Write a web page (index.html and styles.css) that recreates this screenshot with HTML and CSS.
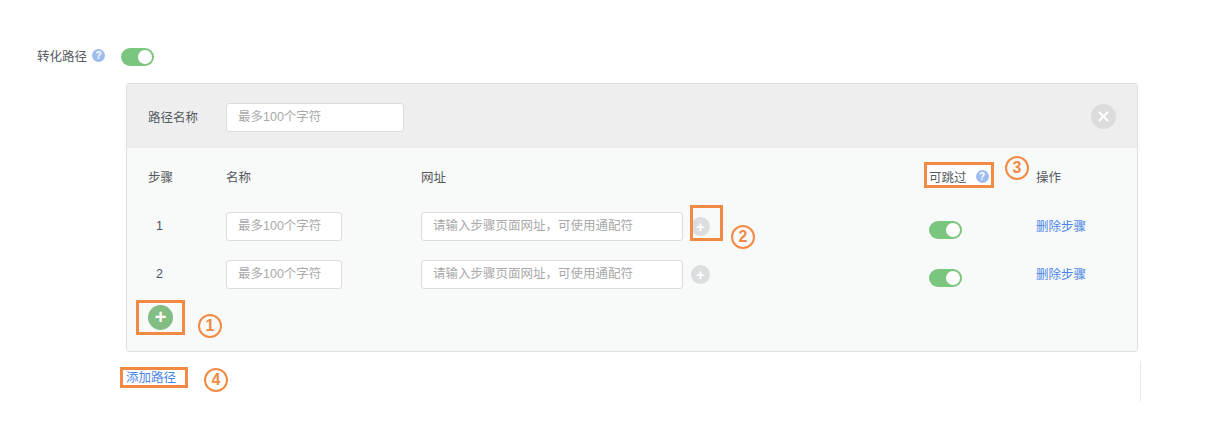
FILE: index.html
```html
<!DOCTYPE html>
<html lang="zh-CN">
<head>
    <meta charset="UTF-8">
    <title>转化路径</title>
    <link rel="stylesheet" href="styles.css">
</head>
<body>
    <div class="page">
        <div class="setting">
            <span class="setting-label">转化路径</span>
            <span class="help">?</span>
            <span class="switch setting-switch"></span>
        </div>

        <div class="panel">
            <div class="panel-head">
                <span class="panel-title">路径名称</span>
                <input class="field field-title" placeholder="最多100个字符">
                <span class="close">
                    <svg width="11" height="11" viewBox="0 0 11 11"><path d="M1.5 1.5l8 8M9.5 1.5l-8 8" stroke="#fff" stroke-width="2" stroke-linecap="round"/></svg>
                </span>
            </div>
            <div class="panel-body">
                <div class="row row-head">
                    <span>步骤</span>
                    <span>名称</span>
                    <span>网址</span>
                    <span class="skip-head">可跳过<span class="help">?</span></span>
                    <span>操作</span>
                </div>
                <div class="row">
                    <span class="step-no">1</span>
                    <input class="field field-name" placeholder="最多100个字符">
                    <span class="url-cell">
                        <input class="field field-url" placeholder="请输入步骤页面网址，可使用通配符">
                        <span class="plus plus-grey">+</span>
                    </span>
                    <span class="switch row-switch"></span>
                    <a class="link row-link" href="#">删除步骤</a>
                </div>
                <div class="row">
                    <span class="step-no">2</span>
                    <input class="field field-name" placeholder="最多100个字符">
                    <span class="url-cell">
                        <input class="field field-url" placeholder="请输入步骤页面网址，可使用通配符">
                        <span class="plus plus-grey">+</span>
                    </span>
                    <span class="switch row-switch"></span>
                    <a class="link row-link" href="#">删除步骤</a>
                </div>
                <span class="plus plus-green">+</span>
            </div>
        </div>

        <div class="footer">
            <a class="link" href="#">添加路径</a>
        </div>

        <!-- annotations drawn over the screenshot -->
        <div class="mark mark-add"></div>
        <div class="mark mark-plus"></div>
        <div class="mark mark-skip"></div>
        <div class="mark mark-path"></div>
        <span class="num num-1">1</span>
        <span class="num num-2">2</span>
        <span class="num num-3">3</span>
        <span class="num num-4">4</span>
    </div>
</body>
</html>
```

FILE: styles.css
```css
body {
    margin: 0;
    background-color: #ffffff;
    color: #555a60;
    font-family: "Liberation Sans", "Noto Sans CJK SC", sans-serif;
    font-size: 12.5px;
}
.page {
    position: relative;
    height: 436px;
    padding-top: 47px;
    box-sizing: border-box;
    overflow: hidden;
}
.setting {
    display: flex;
    align-items: center;
    padding-left: 37px;
    height: 19px;
}
.setting-label {
    margin-top: -2px;
}
.help {
    display: block;
    width: 13px;
    height: 13px;
    border-radius: 50%;
    background-color: #9dbdee;
    color: #ffffff;
    font-size: 10px;
    font-weight: bold;
    line-height: 13px;
    text-align: center;
}
.setting .help {
    margin: -2px 0 0 5px;
}
.switch {
    display: block;
    position: relative;
    width: 33px;
    height: 18px;
    border-radius: 9px;
    background-color: #7bc67e;
}
.switch::after {
    content: "";
    position: absolute;
    right: 2px;
    top: 2px;
    width: 14px;
    height: 14px;
    border-radius: 50%;
    background-color: #ffffff;
}
.setting-switch {
    margin-left: 16px;
}
.panel {
    width: 1010px;
    margin: 17px 0 0 126px;
    border: 1px solid #dfdfdf;
    border-radius: 3px;
    background-color: #f8f9f9;
}
.panel-head {
    display: flex;
    align-items: center;
    height: 64px;
    padding: 0 21px;
    background-color: #eeeeee;
}
.panel-title {
    width: 78px;
}
.field {
    box-sizing: border-box;
    height: 29px;
    padding: 0 11px;
    border: 1px solid #dcdcdc;
    border-radius: 3px;
    background-color: #ffffff;
    font-family: inherit;
    font-size: 12.5px;
    outline: none;
}
.field::placeholder {
    color: #a9a9a9;
}
.field-title {
    width: 178px;
    margin-top: 2px;
}
.field-name {
    width: 116px;
}
.field-url {
    width: 262px;
}
.close {
    display: flex;
    align-items: center;
    justify-content: center;
    width: 25px;
    height: 25px;
    margin-left: auto;
    border-radius: 50%;
    background-color: #dcdcdc;
}
.panel-body {
    padding: 0 0 21px 21px;
}
.row {
    display: grid;
    grid-template-columns: 78px 195px 508px 107px 1fr;
    align-items: center;
    height: 48px;
}
.row-head {
    height: 54px;
    padding-top: 2px;
    box-sizing: border-box;
}
.skip-head {
    display: flex;
    align-items: center;
    width: 62px;
    height: 20px;
    margin-left: -2px;
    padding-left: 2px;
    background-color: #ffffff;
}
.skip-head .help {
    margin-left: 9px;
}
.step-no {
    padding-left: 8px;
    color: #47536b;
}
.url-cell {
    display: flex;
    align-items: center;
}
.plus {
    display: flex;
    align-items: center;
    justify-content: center;
    border-radius: 50%;
    color: #ffffff;
    font-weight: bold;
}
.plus-grey {
    width: 19px;
    height: 19px;
    margin-left: 8px;
    background-color: #dcdddf;
    font-size: 15px;
}
.plus-green {
    width: 25px;
    height: 25px;
    margin: 7px 0 0 0;
    background-color: #82bd84;
    font-size: 20px;
}
.row-switch {
    margin-top: 7px;
}
.link {
    color: #4a86e8;
    text-decoration: none;
}
.row-link {
    margin-bottom: 2px;
}
.footer {
    width: 1016px;
    height: 40px;
    margin: 9px 0 0 125px;
    padding: 8px 0 0 1px;
    box-sizing: border-box;
    border-right: 1px solid #e6e6e6;
}
.footer .link {
    display: block;
    line-height: 18px;
}
.mark {
    position: absolute;
    box-sizing: border-box;
    border: 3px solid #f28a44;
}
.mark-add { left: 136px; top: 300px; width: 49px; height: 35px; }
.mark-plus { left: 690px; top: 205px; width: 33px; height: 36px; }
.mark-skip { left: 924px; top: 162px; width: 70px; height: 26px; }
.mark-path { left: 120px; top: 367px; width: 68px; height: 21px; }
.num {
    position: absolute;
    box-sizing: border-box;
    width: 24px;
    height: 24px;
    border: 2px solid #f28a44;
    border-radius: 50%;
    color: #f28a44;
    font-size: 16px;
    font-weight: bold;
    line-height: 20px;
    text-align: center;
}
.num-1 { left: 198px; top: 314px; }
.num-2 { left: 731px; top: 225px; }
.num-3 { left: 1005px; top: 156px; }
.num-4 { left: 204px; top: 368px; }
```
